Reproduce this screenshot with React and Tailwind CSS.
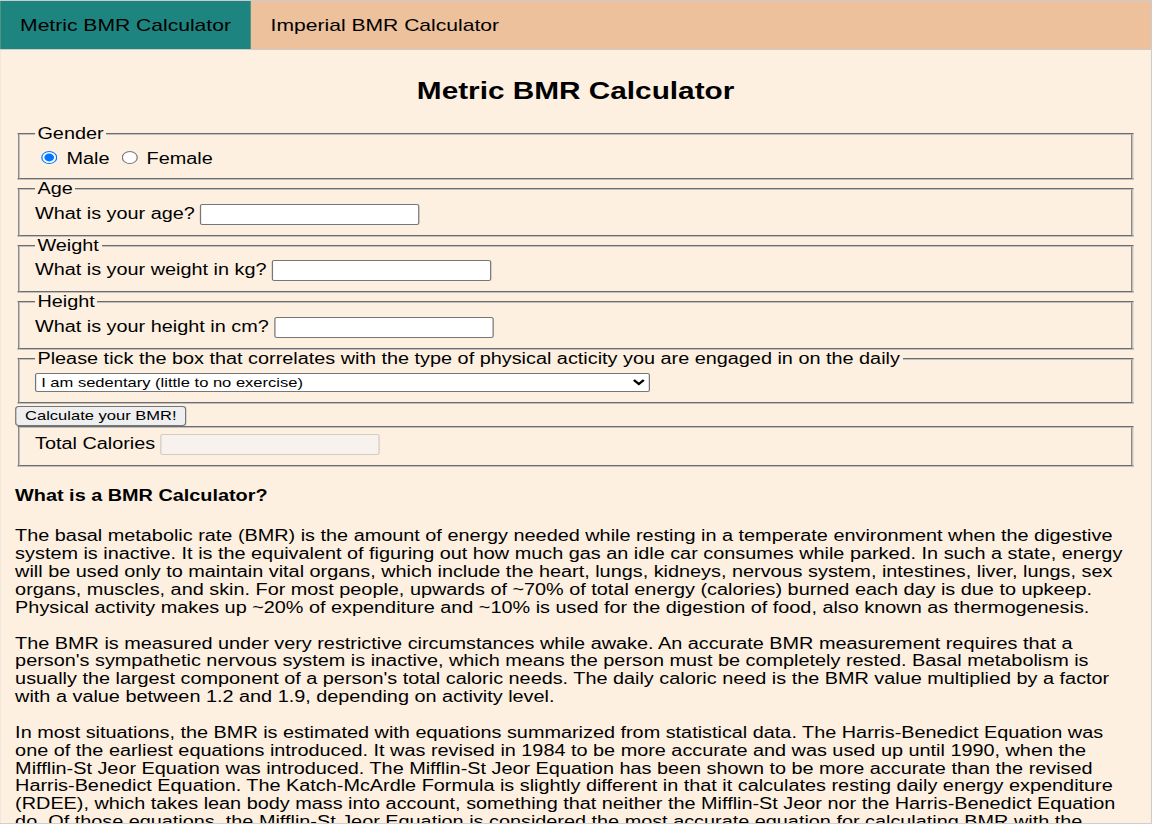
export default function App() {
  const fieldsetCls =
    "mx-[2px] border-2 [border-style:groove] border-[#c0c0c0] px-[12px] pt-[5.6px] pb-[10px]";
  const inputCls =
    "h-[21px] w-[177px] rounded-[2px] border border-[#767676] bg-white px-[2px] py-[1px] text-[13.33px] align-baseline";
  const radioCls = "mt-[3px] mr-[3px] mb-0 ml-[5px] h-[13px] w-[13px] align-baseline";

  return (
    <div className="h-[824px] w-[1152px] overflow-hidden border-b border-[#cfcfcf] bg-[#fdf0e1] text-black">
      <div className="-ml-[1.3px] w-[930px] origin-top-left scale-x-[1.24] font-['Liberation_Sans',Arial,sans-serif] leading-[1.117]">
        {/* Tabs */}
        <div className="flex h-[50px] border border-[#ccc] bg-[#ecc19c]">
          <button className="h-[48px] bg-[#1e847f] px-4 text-[17px] text-black">
            Metric BMR Calculator
          </button>
          <button className="h-[48px] px-4 text-[17px] text-black">
            Imperial BMR Calculator
          </button>
        </div>

        {/* Tab content */}
        <div className="border border-t-0 border-[#ccc] px-3 pt-[6px] pb-6">
          <h2 className="mt-[21.6px] mb-[20.6px] text-center text-[24px] font-bold">
            Metric BMR Calculator
          </h2>

          <form className="text-[16px]">
            <fieldset className={fieldsetCls}>
              <legend className="px-[2px]">Gender</legend>
              <input type="radio" name="gender" defaultChecked className={radioCls} /> Male{" "}
              <input type="radio" name="gender" className={radioCls} /> Female
            </fieldset>

            <fieldset className={fieldsetCls}>
              <legend className="px-[2px]">Age</legend>
              What is your age? <input type="text" className={inputCls} />
            </fieldset>

            <fieldset className={fieldsetCls}>
              <legend className="px-[2px]">Weight</legend>
              What is your weight in kg? <input type="text" className={inputCls} />
            </fieldset>

            <fieldset className={fieldsetCls}>
              <legend className="px-[2px]">Height</legend>
              What is your height in cm? <input type="text" className={inputCls} />
            </fieldset>

            <fieldset className={fieldsetCls}>
              <legend className="px-[2px]">
                Please tick the box that correlates with the type of physical acticity you are engaged in on the daily
              </legend>
              <select className="h-[19px] w-[496px] rounded-[2px] border border-[#767676] bg-white text-[13.33px] text-black">
                <option>I am sedentary (little to no exercise)</option>
                <option>I am lightly active (light exercise 1-3 days per week)</option>
                <option>I am moderately active (moderate exercise 3-5 days per week)</option>
                <option>I am very active (hard exercise 6-7 days per week)</option>
                <option>I am super active (very hard exercise and a physical job)</option>
              </select>
            </fieldset>

            <button
              type="button"
              className="mt-[2px] rounded-[3px] border border-[#767676] bg-[#efefef] px-[7px] py-[1.5px] text-[13.33px] text-black"
            >
              Calculate your BMR!
            </button>

            <fieldset className={fieldsetCls}>
              Total Calories{" "}
              <input
                type="text"
                disabled
                className="h-[21px] w-[177px] rounded-[2px] border border-[#d4cbc1] bg-[#f7f2ed] px-[2px] py-[1px] text-[13.33px] align-baseline"
              />
            </fieldset>
          </form>

          <h4 className="mt-[20px] mb-[23px] text-[16px] font-bold">What is a BMR Calculator?</h4>

          <p className="text-[16px]">
            The basal metabolic rate (BMR) is the amount of energy needed while resting in a temperate environment when
            the digestive system is inactive. It is the equivalent of figuring out how much gas an idle car consumes while
            parked. In such a state, energy will be used only to maintain vital organs, which include the heart, lungs,
            kidneys, nervous system, intestines, liver, lungs, sex organs, muscles, and skin. For most people, upwards of
            ~70% of total energy (calories) burned each day is due to upkeep. Physical activity makes up ~20% of
            expenditure and ~10% is used for the digestion of food, also known as thermogenesis.
            <br />
            <br />
            The BMR is measured under very restrictive circumstances while awake. An accurate BMR measurement requires
            that a person's sympathetic nervous system is inactive, which means the person must be completely rested.
            Basal metabolism is usually the largest component of a person's total caloric needs. The daily caloric need
            is the BMR value multiplied by a factor with a value between 1.2 and 1.9, depending on activity level.
            <br />
            <br />
            In most situations, the BMR is estimated with equations summarized from statistical data. The
            Harris-Benedict Equation was one of the earliest equations introduced. It was revised in 1984 to be more
            accurate and was used up until 1990, when the Mifflin-St Jeor Equation was introduced. The Mifflin-St Jeor
            Equation has been shown to be more accurate than the revised Harris-Benedict Equation. The Katch-McArdle
            Formula is slightly different in that it calculates resting daily energy expenditure (RDEE), which takes
            lean body mass into account, something that neither the Mifflin-St Jeor nor the Harris-Benedict Equation do.
            Of those equations, the Mifflin-St Jeor Equation is considered the most accurate equation for calculating
            BMR with the exception that the Katch-McArdle Formula can be more accurate for people who are leaner and
            know their body fat percentage.
          </p>
        </div>
      </div>
    </div>
  );
}
